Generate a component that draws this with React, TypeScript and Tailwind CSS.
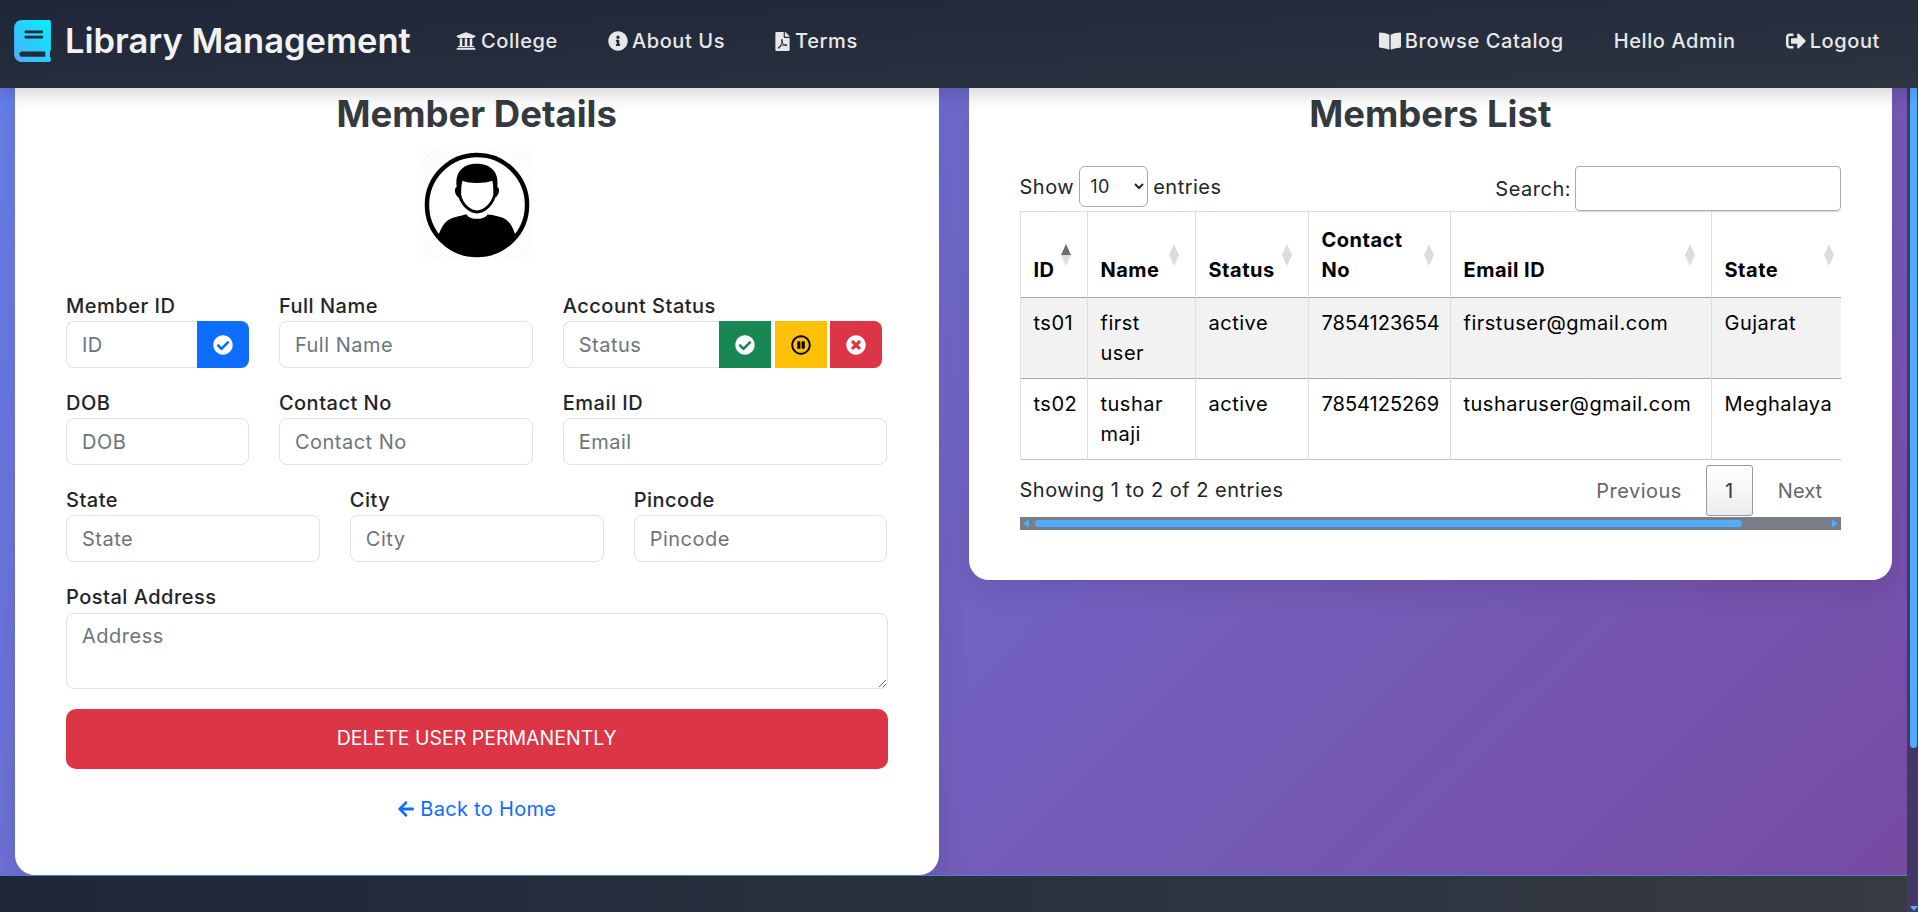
import { FaArrowLeft, FaBookOpen, FaCheckCircle, FaFilePdf, FaInfoCircle, FaRegPauseCircle, FaSignOutAlt, FaTimesCircle, FaUniversity } from 'react-icons/fa';

const headers = [
  { label: ['ID'], width: 'w-[67px]', active: true },
  { label: ['Name'], width: 'w-[108px]' },
  { label: ['Status'], width: 'w-[113px]' },
  { label: ['Contact', 'No'], width: 'w-[142px]' },
  { label: ['Email ID'], width: 'w-[261px]' },
  { label: ['State'], width: 'w-[139px]' },
];

const members = [
  { id: 'ts01', name: 'first user', status: 'active', phone: '7854123654', email: 'firstuser@gmail.com', state: 'Gujarat' },
  { id: 'ts02', name: 'tushar maji', status: 'active', phone: '7854125269', email: 'tusharuser@gmail.com', state: 'Meghalaya' },
];

function Field({ label, placeholder, span }: { label: string; placeholder: string; span: string }) {
  return (
    <div className={span}>
      <label className="block h-[27px] text-[20px] leading-[25px] font-medium text-[#212529]">{label}</label>
      <input
        placeholder={placeholder}
        className="h-[47px] w-full rounded-[8px] border border-[#dee2e6] bg-white px-[15px] text-[20px] outline-none placeholder:text-[#6c757d]"
      />
    </div>
  );
}

function Avatar() {
  return (
    <svg viewBox="-3 -3 111 111" className="h-[110px] w-[110px]">
      <defs>
        <pattern id="hatch" width="4" height="4" patternUnits="userSpaceOnUse" patternTransform="rotate(45)">
          <rect width="4" height="4" fill="#ffffff" />
          <rect width="1" height="4" fill="#f6f6f6" />
        </pattern>
      </defs>
      <rect x="-3" y="-3" width="111" height="111" fill="url(#hatch)" />
      <circle cx="52.5" cy="52.5" r="50.5" fill="#ffffff" stroke="#000000" strokeWidth="4.5" />
      <path d="M13 85C17 72 22 66 33 64C38 63 40 62 42 62C45 68 60 68 63 62C66 62 70 63 74 64C84 66 88 72 92 85A50 50 0 0 1 13 85Z" fill="#000000" />
      <path d="M32 34C30 18 40 11 52 11C65 11 75 18 73 34C76 36 75 42 71 45C68 54 60 61 52.5 61C45 61 37 54 34 45C30 42 29 36 32 34Z" fill="#000000" />
      <path d="M38 28C44 31 60 31 68 28C69 32 69 38 69 42C67 51 59 58 52.5 58C46 58 38 51 36.5 42C36.5 38 36.5 32 38 28Z" fill="#ffffff" />
    </svg>
  );
}

function Logo() {
  return (
    <svg viewBox="0 0 448 512" className="h-[42px] w-[37px]">
      <defs>
        <linearGradient id="logoGrad" x1="1" y1="0" x2="0" y2="1">
          <stop offset="0" stopColor="#00f2fe" />
          <stop offset="1" stopColor="#4facfe" />
        </linearGradient>
      </defs>
      <path
        fill="url(#logoGrad)"
        d="M448 360V24c0-13.3-10.7-24-24-24H96C43 0 0 43 0 96v320c0 53 43 96 96 96h328c13.3 0 24-10.7 24-24v-16c0-7.5-3.5-14.3-8.9-18.7-4.2-15.4-4.2-59.3 0-74.7 5.4-4.3 8.9-11.1 8.9-18.6zM128 134c0-3.3 2.7-6 6-6h212c3.3 0 6 2.7 6 6v20c0 3.3-2.7 6-6 6H134c-3.3 0-6-2.7-6-6v-20zm0 64c0-3.3 2.7-6 6-6h212c3.3 0 6 2.7 6 6v20c0 3.3-2.7 6-6 6H134c-3.3 0-6-2.7-6-6v-20zm253.4 250H96c-17.7 0-32-14.3-32-32 0-17.6 14.4-32 32-32h285.4c-1.9 17.1-1.9 46.9 0 64z"
      />
    </svg>
  );
}

function SortIcon({ active }: { active?: boolean }) {
  return (
    <span className="absolute top-[32px] right-[16px] flex flex-col">
      <svg viewBox="0 0 10 11" className="h-[11px] w-[10px]">
        <path d="M5 0L10 11H0Z" fill={active ? '#6b6b6b' : '#dcdcdc'} />
      </svg>
      <svg viewBox="0 0 10 11" className="h-[11px] w-[10px]">
        <path d="M5 11L0 0H10Z" fill="#dcdcdc" />
      </svg>
    </span>
  );
}

function Navbar() {
  return (
    <nav className="relative z-10 flex h-[88px] shrink-0 items-center justify-between bg-linear-to-br from-[#1e2639] to-[#2d3440] pr-[38px] pb-[6px] pl-[14px] text-[20px] font-medium tracking-[0.6px] text-[#e8e8e8] shadow-[0_4px_20px_rgba(0,0,0,0.2)]">
      <div className="flex items-center">
        <Logo />
        <span className="ml-[14px] w-[346px] text-[34.5px] font-semibold tracking-normal whitespace-nowrap text-[#f2f2f2]">Library Management</span>
        <a className="ml-[45px] flex items-center gap-[5px]"><FaUniversity className="text-[20px]" />College</a>
        <a className="ml-[50px] flex items-center gap-[4px]"><FaInfoCircle className="text-[20px]" />About Us</a>
        <a className="ml-[48px] flex items-center gap-[3px]"><FaFilePdf className="text-[19px]" />Terms</a>
      </div>
      <div className="flex items-center">
        <a className="flex items-center gap-[4px]"><FaBookOpen className="text-[22px]" />Browse Catalog</a>
        <a className="ml-[50px]">Hello Admin</a>
        <a className="ml-[50px] flex items-center gap-[4px]"><FaSignOutAlt className="text-[20px]" />Logout</a>
      </div>
    </nav>
  );
}

function MemberDetails() {
  return (
    <section className="min-w-0 flex-1 rounded-b-[20px] bg-white px-[51px] pb-[53px] shadow-[0_10px_30px_rgba(0,0,0,0.1)]">
      <h2 className="text-center text-[36.5px] leading-[52px] font-bold tracking-normal text-[#343a40]">Member Details</h2>
      <div className="mt-[10px] flex justify-center">
        <Avatar />
      </div>
      <div className="mt-[34px] grid grid-cols-12 gap-x-[30px] gap-y-[23px]">
        <div className="col-span-3">
          <label className="block h-[27px] text-[20px] leading-[25px] font-medium text-[#212529]">Member ID</label>
          <div className="flex h-[47px]">
            <input placeholder="ID" className="w-[131px] rounded-l-[8px] border border-r-0 border-[#dee2e6] px-[15px] text-[20px] outline-none placeholder:text-[#6c757d]" />
            <button className="flex w-[52px] items-center justify-center rounded-r-[8px] bg-[#0d6efd] text-[20px] text-white"><FaCheckCircle /></button>
          </div>
        </div>
        <Field span="col-span-4" label="Full Name" placeholder="Full Name" />
        <div className="col-span-5">
          <label className="block h-[27px] text-[20px] leading-[25px] font-medium text-[#212529]">Account Status</label>
          <div className="flex h-[47px]">
            <input placeholder="Status" className="w-[156px] rounded-l-[8px] border border-r-0 border-[#dee2e6] px-[15px] text-[20px] outline-none placeholder:text-[#6c757d]" />
            <button className="flex w-[52px] items-center justify-center bg-[#198754] text-[20px] text-white"><FaCheckCircle /></button>
            <button className="ml-[4px] flex w-[52px] items-center justify-center bg-[#ffc107] text-[20px] text-black"><FaRegPauseCircle /></button>
            <button className="ml-[3px] flex w-[52px] items-center justify-center rounded-r-[8px] bg-[#dc3545] text-[20px] text-white"><FaTimesCircle /></button>
          </div>
        </div>
        <Field span="col-span-3" label="DOB" placeholder="DOB" />
        <Field span="col-span-4" label="Contact No" placeholder="Contact No" />
        <Field span="col-span-5" label="Email ID" placeholder="Email" />
      </div>
      <div className="mt-[23px] grid grid-cols-3 gap-x-[30px]">
        <Field span="" label="State" placeholder="State" />
        <Field span="" label="City" placeholder="City" />
        <Field span="" label="Pincode" placeholder="Pincode" />
      </div>
      <label className="mt-[23px] block h-[28px] text-[20px] leading-[25px] font-medium text-[#212529]">Postal Address</label>
      <textarea
        placeholder="Address"
        className="block h-[76px] w-full rounded-[8px] border border-[#dee2e6] px-[15px] py-[7px] text-[20px] outline-none placeholder:text-[#6c757d]"
      />
      <button className="mt-[20px] h-[60px] w-full rounded-[10px] bg-[#dc3545] text-[19.5px] tracking-normal text-white">DELETE USER PERMANENTLY</button>
      <a className="mt-[26px] flex h-[27px] items-center justify-center gap-[5px] text-[20px] tracking-[0.3px] text-[#0d6efd]"><FaArrowLeft className="text-[18px]" />Back to Home</a>
    </section>
  );
}

function MembersList() {
  return (
    <section className="min-w-0 flex-1 self-start rounded-b-[20px] bg-white px-[51px] pb-[50px] shadow-[0_10px_30px_rgba(0,0,0,0.1)]">
      <h2 className="text-center text-[36.5px] leading-[52px] font-bold tracking-normal text-[#343a40]">Members List</h2>
      <div className="mt-[26px] flex h-[45px] items-start justify-between text-[20px] text-[#212529]">
        <label className="flex h-[41px] items-center gap-[5px]">
          Show
          <select className="h-[41px] w-[69px] rounded-[6px] border border-[#aaaaaa] bg-white pl-[6px] text-[18px]">
            <option>10</option>
          </select>
          entries
        </label>
        <label className="flex h-[45px] items-center gap-[4px]">
          Search:
          <input className="h-[45px] w-[266px] rounded-[4px] border border-[#aaaaaa] bg-white outline-none" />
        </label>
      </div>
      <div className="overflow-hidden">
        <table className="w-[830px] table-fixed border-collapse text-left text-[20px] leading-[30px] text-black">
          <thead>
            <tr className="border-t border-b border-t-[#dddddd] border-b-[#a8a8a8]">
              {headers.map((h) => (
                <th key={h.label[0]} className={`relative h-[86px] border-x border-[#dddddd] px-[13px] pb-[12px] align-bottom font-bold ${h.width}`}>
                  {h.label.map((line) => (
                    <div key={line}>{line}</div>
                  ))}
                  <SortIcon active={h.active} />
                </th>
              ))}
            </tr>
          </thead>
          <tbody>
            {members.map((m, i) => (
              <tr key={m.id} className={i === 0 ? 'border-b border-[#a8a8a8] bg-[#f2f2f2]' : 'border-b border-[#c4c4c4]'}>
                <td className="h-[81px] border-x border-[#dddddd] px-[13px] py-[10px] align-top">{m.id}</td>
                <td className="border-x border-[#dddddd] px-[13px] py-[10px] align-top">{m.name}</td>
                <td className="border-x border-[#dddddd] px-[13px] py-[10px] align-top">{m.status}</td>
                <td className="border-x border-[#dddddd] px-[13px] py-[10px] align-top tracking-normal">{m.phone}</td>
                <td className="border-x border-[#dddddd] px-[13px] py-[10px] align-top">{m.email}</td>
                <td className="border-x border-[#dddddd] px-[13px] py-[10px] align-top">{m.state}</td>
              </tr>
            ))}
          </tbody>
        </table>
      </div>
      <div className="mt-[5px] flex h-[52px] items-start justify-between text-[20px] text-[#212529]">
        <span className="mt-[10px]">Showing 1 to 2 of 2 entries</span>
        <div className="flex items-start text-[#666666]">
          <span className="mt-[11px] pr-[24px]">Previous</span>
          <span className="flex h-[51px] w-[47px] items-center justify-center rounded-[3px] border border-[#979797] bg-linear-to-b from-white to-[#ececec] text-[#333333]">1</span>
          <span className="mt-[11px] pr-[19px] pl-[25px] tracking-normal">Next</span>
        </div>
      </div>
      <div className="flex h-[13px] items-center justify-between bg-[#7a7d85] px-[3px]">
        <svg viewBox="0 0 6 8" className="h-[9px] w-[6px]"><path d="M0 4L6 0V8Z" fill="#4facfe" /></svg>
        <div className="mr-[90px] ml-[6px] h-[7px] flex-1 rounded-[3px] bg-[#4facfe]" />
        <svg viewBox="0 0 6 8" className="h-[9px] w-[6px]"><path d="M6 4L0 0V8Z" fill="#4facfe" /></svg>
      </div>
    </section>
  );
}

export default function App() {
  return (
    <div className="flex h-screen flex-col overflow-hidden font-['Inter',sans-serif] tracking-[0.5px]">
      <Navbar />
      <div className="flex min-h-0 flex-1">
        <div className="flex min-w-0 flex-1 flex-col">
          <main className="flex flex-1 gap-[30px] bg-linear-135 from-[#667eea] to-[#764ba2] px-[15px]">
            <MemberDetails />
            <MembersList />
          </main>
          <footer className="h-[37px] shrink-0 border-t border-[#3f87c9] bg-linear-to-r from-[#1e2738] to-[#363b44]" />
        </div>
        {/* window scrollbar */}
        <div className="flex w-[11px] shrink-0 flex-col items-center justify-between bg-[#433764] pb-[1px]">
          <div className="ml-[2px] h-[660px] w-[7px] rounded-b-[4px] bg-[#4facfe]" />
          <svg viewBox="0 0 8 5" className="ml-[2px] h-[5px] w-[8px]"><path d="M4 5L0 0H8Z" fill="#4facfe" /></svg>
        </div>
      </div>
    </div>
  );
}
